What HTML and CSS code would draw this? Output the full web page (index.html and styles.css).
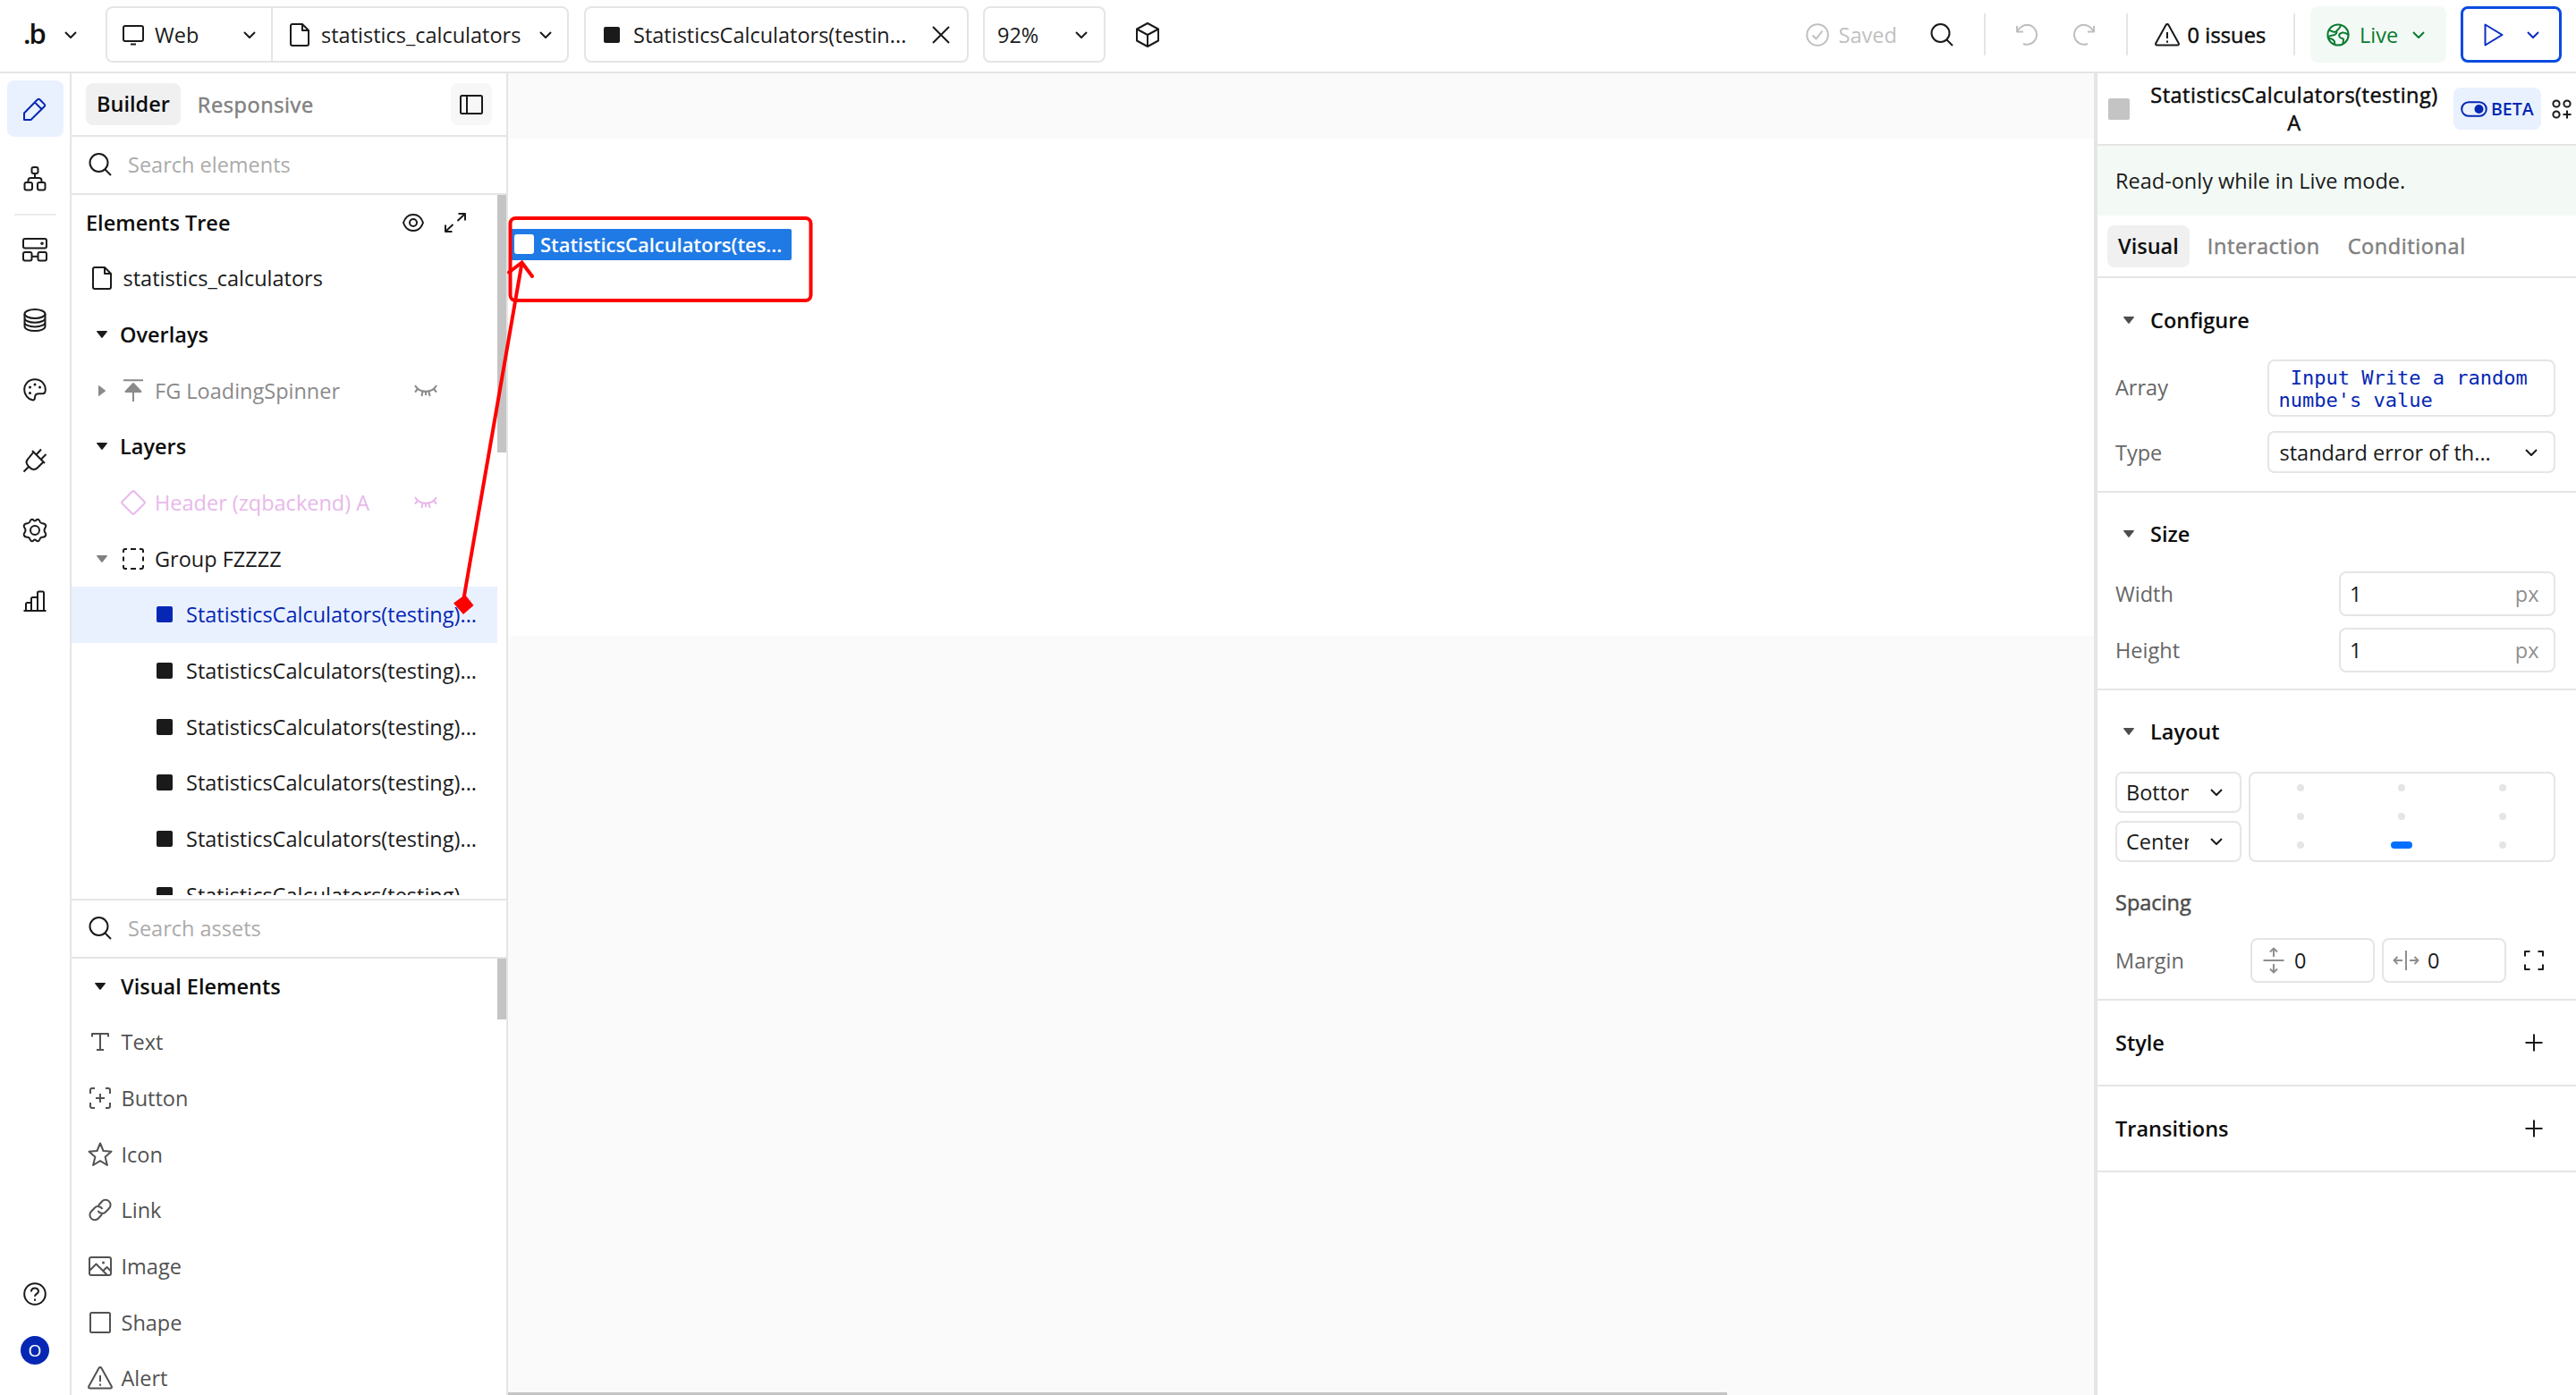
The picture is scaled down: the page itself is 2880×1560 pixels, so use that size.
FILE: index.html
```html
<!DOCTYPE html>
<html lang="en">
<head>
<meta charset="utf-8">
<title>statistics_calculators | Editor</title>
<link rel="stylesheet" href="styles.css">
</head>
<body>
<svg class="defs" aria-hidden="true">
  <symbol id="chevron" viewBox="0 0 14 8"><path d="M1 1l6 6 6-6"/></symbol>
  <symbol id="search" viewBox="0 0 26 26"><circle cx="11.5" cy="11" r="10"/><path d="M18.5 18.5l6.500 6.500"/></symbol>
  <symbol id="page" viewBox="0 0 22 26"><path d="M3 1h11l7 7v15a2 2 0 0 1-2 2H3a2 2 0 0 1-2-2V3a2 2 0 0 1 2-2zM14 1v7h7"/></symbol>
  <symbol id="down" viewBox="0 0 12 8"><path d="M.6 0h10.800c.5 0 .7.500.4.900L6.700 7.500c-.4.500-1 .5-1.400 0L.2.900C-.1.500.1 0 .6 0z"/></symbol>
  <symbol id="closed-eye" viewBox="0 0 26 16"><path d="M1 2c5 9 19 9 24 0M4 6L1 9.500M9.500 8.500L8.500 14M16.500 8.500l1 5.500M22 6l3 3.500M13 9v4"/></symbol>
  <symbol id="warn" viewBox="0 0 28 26"><path d="M12.500 2L1.300 22.300c-.6 1.200.1 2.200 1.300 2.200h22.800c1.200 0 1.900-1 1.300-2.200L15.500 2c-.7-1.200-2.300-1.200-3 0zM14 10v7M14 19.500v2.300"/></symbol>
  <symbol id="plus" viewBox="0 0 20 20"><path d="M10 .5v19M.5 10h19"/></symbol>
</svg>

<header class="topbar">
  <div class="logo"><span class="logo-text">.b</span><svg class="chev"><use href="#chevron"/></svg></div>
  <div class="box switcher">
    <div class="switch-web">
      <svg class="ic" width="24" height="24" viewBox="0 0 24 24"><rect x="1" y="2" width="22" height="17" rx="2"/><path d="M9 22.500h6"/></svg>
      <span class="web-name">Web</span><svg class="chev"><use href="#chevron"/></svg>
    </div>
    <div class="switch-page">
      <svg class="ic" width="22" height="26"><use href="#page"/></svg>
      <span class="page-name">statistics_calculators</span><svg class="chev"><use href="#chevron"/></svg>
    </div>
  </div>
  <div class="box element-tab"><i class="sq"></i><span>StatisticsCalculators(testin...</span><svg class="ic" width="18" height="18" viewBox="0 0 18 18"><path d="M0 0l18 18M18 0L0 18"/></svg></div>
  <div class="box zoom"><span>92%</span><svg class="chev"><use href="#chevron"/></svg></div>
  <svg class="ic cube" width="28" height="28" viewBox="0 0 28 28"><path d="M14 1l12 6.500v13L14 27 2 20.500v-13zM2 7.500L14 14l12-6.500M14 14v13"/></svg>
  <div class="topbar-right">
    <svg class="ic faint" width="26" height="26" viewBox="0 0 26 26"><circle cx="13" cy="13" r="11.800"/><path d="M7.500 13.500l4 4 7-9"/></svg>
    <span class="saved">Saved</span>
    <svg class="ic find" width="26" height="26"><use href="#search"/></svg>
    <i class="vline v1"></i>
    <svg class="ic faint undo" width="26" height="26" viewBox="0 0 26 26"><path d="M2 3v6.500h7M2.500 9C5 4.500 9.500 1.800 14 1.800A11 11 0 1 1 9 23"/></svg>
    <svg class="ic faint redo" width="26" height="26" viewBox="0 0 26 26"><path d="M24 3v6.500h-7M23.500 9C21 4.500 16.500 1.800 12 1.800A11 11 0 1 0 17 23"/></svg>
    <i class="vline v2"></i>
    <svg class="ic" width="28" height="26"><use href="#warn"/></svg>
    <span class="issues medium">0 issues</span>
    <i class="vline v3"></i>
    <div class="live">
      <svg class="ic" width="26" height="26" viewBox="0 0 26 26"><circle cx="13" cy="13" r="11.600"/><path d="M16 2c-.5 4-3 4-4.500 6.500S5 9 3 7.500M11.500 8.500c.5 3-2 5-4.500 5s-3 1.500-5 1M25 13c-3-1.500-4-3-7-2.500s-4.500 2-3.500 4.500 4 1 4.500 3-1 3-.5 4.500M9 24c0-3 1-3-1-5s-3-2.500-5.500-2"/></svg>
      <span>Live</span><svg class="chev"><use href="#chevron"/></svg>
    </div>
    <div class="play">
      <svg class="ic" width="22" height="26" viewBox="0 0 22 26"><path d="M1.500 1.500v23L20.500 13z"/></svg>
      <svg class="chev"><use href="#chevron"/></svg>
    </div>
  </div>
</header>

<div class="workspace">
  <nav class="rail">
    <div class="rail-item active"><svg class="ic" width="26" height="26" viewBox="0 0 26 26"><path d="M1 25v-7.500L16 2.300c.7-.8 1.700-.8 2.400 0l5.300 5.300c.7.700.7 1.700 0 2.400L8.500 25zM13 5.500l7.500 7.500"/></svg></div>
    <div class="rail-item"><svg class="ic" width="26" height="28" viewBox="0 0 26 28"><rect x="9.500" y="1" width="7" height="7" rx="2"/><rect x="1.500" y="18" width="8.500" height="8.500" rx="2"/><rect x="16" y="18" width="8.500" height="8.500" rx="2"/><path d="M13 8v5M5.500 18v-2a3 3 0 0 1 3-3h9a3 3 0 0 1 3 3v2"/></svg></div>
    <i class="rail-line"></i>
    <div class="rail-item"><svg class="ic" width="28" height="28" viewBox="0 0 28 28"><rect x="1" y="2" width="26" height="10.500" rx="2"/><circle cx="22" cy="7.200" r=".8"/><rect x="1" y="17" width="9.500" height="9.500" rx="2"/><rect x="17.500" y="17" width="9.500" height="9.500" rx="2"/><path d="M10.500 21.800h7"/></svg></div>
    <div class="rail-item"><svg class="ic" width="26" height="26" viewBox="0 0 26 26"><ellipse cx="13" cy="6" rx="11.500" ry="5"/><path d="M1.500 6v14c0 2.800 5 5 11.500 5s11.500-2.200 11.500-5V6M1.500 10.700c0 2.800 5 5 11.500 5s11.500-2.200 11.500-5M1.500 15.400c0 2.800 5 5 11.500 5s11.500-2.200 11.500-5"/></svg></div>
    <div class="rail-item"><svg class="ic" width="26" height="26" viewBox="0 0 26 26"><path d="M13 1.200C6 1.200 1.200 6.500 1.200 12.700c0 6 4.300 10.600 8.800 11.600 2 .5 3-1 3-2.800 0-3 2-4.300 4.500-4.300h4c2 0 3.300-2 3.300-4.500C24.800 6.500 20 1.200 13 1.200z"/><path class="dots" d="M13 7h.01M7.500 10h.01M18.500 10h.01M7.500 16.500h.01"/></svg></div>
    <div class="rail-item"><svg class="ic" width="28" height="28" viewBox="0 0 28 28"><path d="M1.500 26.500l6-6M12.500 4.500l11 11-6.500 6.500c-2.500 2.500-6 2.500-8.500 0l-2-2c-2.300-2.300-2.300-5.500 0-8zM11 3l14 14M16 7l5-5.500M21.500 12l5-5"/></svg></div>
    <div class="rail-item"><svg class="ic" width="28" height="28" viewBox="0 0 28 28"><circle cx="14" cy="14" r="5"/><path d="M9 3c1-1.500 2.500-1.500 3.500-.3 1 1 2 1 3 0 1-1.200 2.500-1.200 3.500.3.700 1.200.5 3.200 3 3.300 2.800-.1 4 1.200 4.300 2.700.3 1.700-1.800 2.500-1.800 5s2.100 3.300 1.800 5c-.3 1.500-1.500 2.800-4.300 2.700-2.500.1-2.300 2.100-3 3.300-1 1.500-2.500 1.500-3.500.3-1-1-2-1-3 0-1 1.200-2.500 1.200-3.500-.3-.7-1.200-.5-3.200-3-3.300-2.800.1-4-1.200-4.300-2.700-.3-1.700 1.800-2.500 1.800-5s-2.100-3.300-1.800-5C2 7.500 3.200 6.200 6 6.300 8.500 6.200 8.300 4.200 9 3z"/></svg></div>
    <div class="rail-item"><svg class="ic" width="26" height="26" viewBox="0 0 26 26"><path d="M.5 24h25M3 24v-7.500a1.500 1.500 0 0 1 1.500-1.500H9M9 24V10.500A1.500 1.500 0 0 1 10.500 9H16M16 24V4a1.500 1.500 0 0 1 1.500-1.500h4A1.500 1.500 0 0 1 23 4v20"/></svg></div>
    <div class="rail-foot">
      <svg class="ic" width="26" height="26" viewBox="0 0 26 26"><circle cx="13" cy="13" r="11.800"/><path d="M9 10.500c0-5.200 8-5 8-.6 0 3-4 3-4 5.800M13 18.500V20.800"/></svg>
      <div class="avatar">O</div>
    </div>
  </nav>

  <aside class="left">
    <div class="modes"><b class="pill">Builder</b><span class="mode-off medium wide">Responsive</span>
      <div class="panel-toggle"><svg class="ic" width="26" height="22" viewBox="0 0 26 22"><rect x="1" y="1" width="24" height="20" rx="1.500"/><path d="M8 1v20"/></svg></div></div>
    <div class="search"><svg class="ic" width="26" height="26"><use href="#search"/></svg><span>Search elements</span></div>
    <div class="tree">
      <div class="row title"><b>Elements Tree</b>
        <svg class="ic eye" width="24" height="20" viewBox="0 0 24 20"><path d="M1 10c2-6 6-9 11-9s9 3 11 9c-2 6-6 9-11 9S3 16 1 10z"/><circle cx="12" cy="10" r="4"/></svg>
        <svg class="ic expand" width="24" height="22" viewBox="0 0 24 22"><path d="M15.500 1H23v7.500M22.500 1.500l-8 7.500M1 13.500V21h7.500M1.500 20.500l8-7.500"/></svg></div>
      <div class="row root"><svg class="ic" width="22" height="26"><use href="#page"/></svg><span>statistics_calculators</span></div>
      <div class="row group"><svg class="tri"><use href="#down"/></svg><b>Overlays</b></div>
      <div class="row item gray"><svg class="tri-r" viewBox="0 0 8 12"><path d="M0 .6v10.800c0 .5.500.7.900.4l6.600-5.100c.5-.4.500-1 0-1.400L.9.200C.5-.1 0 .1 0 .6z"/></svg><svg class="ic it" width="24" height="26" viewBox="0 0 24 26"><path d="M1 1.200h22M12 12v13"/><path class="solid" d="M12 5l8.500 9h-17z"/></svg><span>FG LoadingSpinner</span><svg class="ic hid" width="26" height="16"><use href="#closed-eye"/></svg></div>
      <div class="row group"><svg class="tri"><use href="#down"/></svg><b>Layers</b></div>
      <div class="row item pink"><i class="tri-gap"></i><svg class="ic it" width="28" height="28" viewBox="0 0 28 28"><path d="M12.800 1.700L1.700 12.800a1.700 1.700 0 0 0 0 2.400l11.100 11.100a1.700 1.700 0 0 0 2.400 0l11.100-11.100a1.700 1.700 0 0 0 0-2.400L15.200 1.700a1.700 1.700 0 0 0-2.400 0z"/></svg><span>Header (zqbackend) A</span><svg class="ic hid" width="26" height="16"><use href="#closed-eye"/></svg></div>
      <div class="row item"><svg class="tri mid"><use href="#down"/></svg><svg class="ic it dash" width="24" height="24" viewBox="0 0 24 24"><path d="M1 5V3a2 2 0 0 1 2-2h2M19 1h2a2 2 0 0 1 2 2v2M23 19v2a2 2 0 0 1-2 2h-2M5 23H3a2 2 0 0 1-2-2v-2M9 1h6M9 23h6M1 9.500v5M23 9.500v5"/></svg><span>Group FZZZZ</span></div>
      <div class="row leaf selected"><i class="sq"></i><span>StatisticsCalculators(testing)...</span></div>
      <div class="row leaf"><i class="sq"></i><span>StatisticsCalculators(testing)...</span></div>
      <div class="row leaf"><i class="sq"></i><span>StatisticsCalculators(testing)...</span></div>
      <div class="row leaf"><i class="sq"></i><span>StatisticsCalculators(testing)...</span></div>
      <div class="row leaf"><i class="sq"></i><span>StatisticsCalculators(testing)...</span></div>
      <div class="row leaf"><i class="sq"></i><span>StatisticsCalculators(testing)...</span></div>
      <i class="thumb tree-thumb"></i>
    </div>
    <div class="search assets-search"><svg class="ic" width="26" height="26"><use href="#search"/></svg><span>Search assets</span></div>
    <div class="assets">
      <div class="row asset-title"><svg class="tri"><use href="#down"/></svg><b>Visual Elements</b></div>
      <div class="row asset"><svg class="ic" width="28" height="28" viewBox="0 0 28 28"><path d="M5 8.500V5h18v3.500M14 5v18M10 23h8"/></svg><span>Text</span></div>
      <div class="row asset"><svg class="ic" width="28" height="28" viewBox="0 0 28 28"><path d="M3 9V5a2 2 0 0 1 2-2h3M20 3h3a2 2 0 0 1 2 2v4M25 19v4a2 2 0 0 1-2 2h-3M8 25H5a2 2 0 0 1-2-2v-4M14 9v10M9 14h10"/></svg><span>Button</span></div>
      <div class="row asset"><svg class="ic" width="28" height="28" viewBox="0 0 28 28"><path d="M14 1.500l3.500 8.500 9 .8-6.900 6 2.300 9.200L14 21.200 6.100 26l2.300-9.200-6.900-6 9-.8z"/></svg><span>Icon</span></div>
      <div class="row asset"><svg class="ic" width="28" height="28" viewBox="0 0 28 28"><path d="M12 9l4-4.500a5.500 5.500 0 0 1 8 7.800l-3.800 4a5.500 5.500 0 0 1-8.700-1.300M16 19l-4 4.500a5.500 5.500 0 0 1-8-7.800l3.800-4a5.500 5.500 0 0 1 8.700 1.300"/></svg><span>Link</span></div>
      <div class="row asset"><svg class="ic" width="28" height="28" viewBox="0 0 28 28"><rect x="2" y="4" width="24" height="20" rx="2"/><path d="M2 19l7.500-7.500L22 24M17.500 19l4-4 4.500 4.500"/><path class="dots" d="M17.500 10h.01"/></svg><span>Image</span></div>
      <div class="row asset"><svg class="ic" width="28" height="28" viewBox="0 0 28 28"><rect x="3" y="3" width="22" height="22" rx="1.500"/></svg><span>Shape</span></div>
      <div class="row asset"><svg class="ic" width="28" height="26"><use href="#warn"/></svg><span>Alert</span></div>
      <i class="thumb assets-thumb"></i>
    </div>
  </aside>

  <main class="canvas">
    <div class="artboard"></div>
    <div class="element-label"><i></i><span>StatisticsCalculators(tes...</span></div>
    <i class="canvas-scroll"></i>
  </main>

  <aside class="right">
    <div class="prop-head"><i class="type-sq"></i><div class="prop-title medium">StatisticsCalculators(testing) A</div>
      <div class="beta"><svg class="ic" width="30" height="18" viewBox="0 0 30 18"><rect x="1.200" y="1.200" width="27.600" height="15.600" rx="7.800"/><circle class="solid" cx="20.500" cy="9" r="4"/></svg><b>BETA</b></div>
      <svg class="ic apps" width="22" height="22" viewBox="0 0 22 22"><circle cx="5" cy="5" r="3.600"/><circle cx="17" cy="5" r="3.600"/><circle cx="5" cy="17" r="3.600"/><path d="M17 12.500v9M12.500 17h9"/></svg></div>
    <div class="notice">Read-only while in Live mode.</div>
    <div class="tabs"><b class="pill">Visual</b><span class="medium wide">Interaction</span><span class="medium wide">Conditional</span></div>

    <section class="configure">
      <h3><svg class="tri"><use href="#down"/></svg>Configure</h3>
      <div class="field array"><label>Array</label><div class="box code"> Input Write a random
numbe's value</div></div>
      <div class="field type"><label>Type</label><div class="box select"><span>standard error of th...</span><svg class="chev"><use href="#chevron"/></svg></div></div>
    </section>
    <section class="size">
      <h3><svg class="tri"><use href="#down"/></svg>Size</h3>
      <div class="field dim"><label>Width</label><div class="box"><span>1</span><em>px</em></div></div>
      <div class="field dim"><label>Height</label><div class="box"><span>1</span><em>px</em></div></div>
    </section>
    <section class="layout">
      <h3><svg class="tri"><use href="#down"/></svg>Layout</h3>
      <div class="align">
        <div class="align-selects">
          <div class="box"><span>Bottom</span><svg class="chev"><use href="#chevron"/></svg></div>
          <div class="box"><span>Center</span><svg class="chev"><use href="#chevron"/></svg></div>
        </div>
        <div class="box dots-grid"><i></i><i></i><i></i><i></i><i></i><i></i><i></i><i class="on"></i><i></i></div>
      </div>
      <div class="spacing medium">Spacing</div>
      <div class="field margin"><label>Margin</label>
        <div class="box"><svg class="ic" width="28" height="30" viewBox="0 0 28 30"><path d="M2.500 15h23M14 11V2M10 5.500L14 1.500l4 4M14 19v9M10 24.500l4 4 4-4"/></svg><span>0</span></div>
        <div class="box"><svg class="ic" width="30" height="28" viewBox="0 0 30 28"><path d="M15 3v22M11 14H2M5.500 10L1.500 14l4 4M19 14h9M24.500 10l4 4-4 4"/></svg><span>0</span></div>
        <svg class="ic corners" width="22" height="22" viewBox="0 0 22 22"><path d="M1 6.500V1h5.500M15.500 1H21v5.500M21 15.500V21h-5.500M6.500 21H1v-5.500"/></svg></div>
    </section>
    <section class="closed"><b>Style</b><svg class="ic" width="20" height="20"><use href="#plus"/></svg></section>
    <section class="closed"><b>Transitions</b><svg class="ic" width="20" height="20"><use href="#plus"/></svg></section>
  </aside>
</div>

<svg class="annotation" viewBox="500 230 420 470">
  <rect x="570.500" y="244" width="336" height="92" rx="6"/>
  <path d="M518 672L583.500 294M569 304.500l14.500-11 11.500 15.500"/>
  <path class="marker" d="M520 665l9.500 12-11.500 10-11-12.500z"/>
</svg>
</body>
</html>
```
FILE: styles.css
```css
* { box-sizing: border-box; }
body {
  margin: 0; width: 2880px; height: 1560px; overflow: hidden; position: relative;
  display: flex; flex-direction: column; background: #fff; color: #1a1a1a;
  font: 23.5px/32px "Open Sans", "Noto Sans", sans-serif;
}
b, h3 { font-weight: 600; color: #0d0d0d; }
svg { flex: none; display: block; overflow: visible; }
svg.defs { position: absolute; width: 0; height: 0; }
.ic, .chev { fill: none; stroke: currentColor; stroke-width: 2; stroke-linejoin: round; }
.ic .solid { fill: currentColor; }
.ic .dots { stroke-width: 3; stroke-linecap: round; }
.chev { width: 14px; height: 8px; }
.tri, .tri-r { fill: currentColor; width: 12px; height: 8px; }
.tri-r { width: 8px; height: 12px; }
.box { border: 2px solid #e5e5e5; border-radius: 8px; background: #fff; display: flex; align-items: center; }
.sq { width: 18px; height: 18px; background: currentColor; border-radius: 2px; flex: none; }
span, b { white-space: nowrap; }
/* Open Sans ships no 500 cut here, so a thin stroke stands in for it */
.medium { -webkit-text-stroke: .5px currentColor; }
.wide { letter-spacing: .6px; }

.topbar { height: 82px; flex: none; border-bottom: 2px solid #e5e5e5; padding: 7px 16px 0 26px; display: flex; align-items: flex-start; }
.topbar > *, .topbar-right { height: 63px; }
.logo { display: flex; align-items: center; width: 92px; }
.logo-text { width: 46px; font: 600 31px/32px "Open Sans", sans-serif; letter-spacing: -2px; padding-bottom: 4px; color: #111; }
.switcher { width: 518px; }
.switch-web { width: 185px; height: 59px; border-right: 2px solid #e5e5e5; display: flex; align-items: center; padding-left: 17px; }
.web-name { width: 99px; margin-left: 12px; }
.switch-page { display: flex; align-items: center; padding-left: 19px; }
.page-name { width: 244px; margin-left: 13px; }
.element-tab { margin-left: 17px; width: 430px; padding-left: 20px; }
.element-tab span { width: 335px; margin-left: 15px; }
.zoom { margin-left: 16px; width: 137px; padding-left: 14px; }
.zoom span { width: 87px; }
.topbar > .cube { height: 28px; margin: 18px 0 0 33px; }
.topbar-right { margin-left: auto; display: flex; align-items: center; }
.faint, .saved { color: #bfbfbf; }
.saved { margin-left: 11px; width: 68px; }
.find { margin-left: 34px; }
.vline { width: 2px; height: 47px; background: #e5e5e5; }
.v1 { margin-left: 34px; }
.undo { margin-left: 33px; }
.redo { margin-left: 38px; }
.v2 { margin-left: 34px; }
.v2 + .ic { margin-left: 30px; }
.issues { margin-left: 9px; width: 92px; color: #0d0d0d; letter-spacing: .15px; }
.v3 { margin-left: 26.500px; }
.live { margin-left: 17px; width: 152px; height: 63px; border-radius: 8px; background: #f3faf6; color: #0a7a2f; display: flex; align-items: center; padding-left: 18px; }
.live span { width: 59px; margin-left: 11px; }
.play { margin-left: 16px; width: 113px; height: 63px; border: 3px solid #0a4be0; border-radius: 8px; color: #0a2fc0; display: flex; align-items: center; padding-left: 23px; gap: 26px; }

.workspace { flex: 1; min-height: 0; display: flex; }
.rail { width: 80px; flex: none; border-right: 2px solid #e5e5e5; padding-top: 8px; display: flex; flex-direction: column; align-items: center; gap: 15.500px; }
.rail-item { width: 63px; height: 63px; border-radius: 8px; display: flex; align-items: center; justify-content: center; }
.rail-item.active { background: #e9f1ff; color: #0527b3; }
.rail-line { width: 47px; height: 2px; background: #ebebeb; margin: -8px 0 -9px; }
.rail-foot { margin-top: auto; padding-bottom: 34px; display: flex; flex-direction: column; align-items: center; gap: 34px; }
.avatar { width: 32px; height: 32px; border-radius: 50%; background: #0527b3; color: #fff; font-size: 19px; text-align: center; }

.left { width: 488px; flex: none; border-right: 2px solid #e5e5e5; display: flex; flex-direction: column; }
.modes { height: 71px; border-bottom: 2px solid #e5e5e5; display: flex; align-items: center; padding: 0 16px; }
.pill { background: #f0f0f0; border-radius: 8px; height: 47px; line-height: 47px; padding: 0 12px; }
.mode-off { color: #808080; margin-left: 19px; }
.panel-toggle { margin-left: auto; width: 46px; height: 47px; background: #f7f7f7; border-radius: 8px; display: flex; align-items: center; justify-content: center; }
.search { height: 64.500px; flex: none; border-bottom: 2px solid #e5e5e5; display: flex; align-items: center; padding-left: 19px; gap: 18px; }
.search span { color: #ababab; }
.tree { height: 783.500px; overflow: hidden; position: relative; }
.row { height: 62.670px; display: flex; align-items: center; }
.title { padding-left: 16px; }
.title .eye { margin-left: auto; }
.title .expand { margin: 0 45px 0 23px; }
.root { padding-left: 22.500px; gap: 13px; }
.group { padding-left: 28px; gap: 14px; }
.item { padding-left: 28px; }
.item .tri-r { margin: 0 2px; }
.tri-gap { width: 12px; }
.item .it { margin: 0 12px 0 17px; }
.item .it[width="28"] { margin: 0 10px 0 15px; }
.hid { margin-left: auto; margin-right: 77px; }
.gray { color: #8a8a8a; }
.pink { color: #e8b8ea; }
.mid { color: #808080; }
.leaf { padding-left: 95px; gap: 15px; width: 476px; }
.selected { background: #e9f1ff; color: #0527b3; }
.thumb { position: absolute; right: 0; top: 0; width: 10px; background: #c4c4c4; }
.tree-thumb { height: 288px; }
.assets-search { height: 66.500px; margin-top: 4px; border-top: 2px solid #e5e5e5; }
.assets { flex: 1; min-height: 0; overflow: hidden; position: relative; }
.asset-title { padding-left: 26px; gap: 17px; }
.asset { color: #525252; padding-left: 17.500px; gap: 10px; }
.assets-thumb { height: 68px; }

.canvas { flex: 1; background: #fafafa; position: relative; padding-top: 73px; }
.artboard { height: 556px; background: #fff; }
.element-label { position: absolute; left: 2px; top: 174px; width: 315px; height: 35px; background: #1f7ae5; border-radius: 2px; display: flex; align-items: center; padding: 0 0 1px 5px; gap: 7px; color: #fff; font-size: 22px; font-weight: 600; letter-spacing: -.05px; }
.element-label i { width: 22px; height: 22px; border-radius: 3px; background: #fff; }
.canvas-scroll { position: absolute; left: 0; bottom: 0; width: 1363px; height: 3px; background: #c4c4c4; }

.right { width: 539px; flex: none; border-left: 4px solid #e5e5e5; display: flex; flex-direction: column; overflow: hidden; }
.prop-head { height: 81px; flex: none; border-bottom: 2px solid #e5e5e5; display: flex; align-items: center; padding-left: 12px; }
.type-sq { width: 24px; height: 24px; border-radius: 2px; background: #c4c4c4; flex: none; }
.prop-title { width: 330px; flex: none; margin: 0 13px 0 19px; text-align: center; line-height: 31px; letter-spacing: .5px; color: #0d0d0d; }
.beta { width: 98px; height: 47px; flex: none; background: #e9f1ff; border-radius: 8px; color: #0527b3; display: flex; align-items: center; padding-left: 8px; gap: 4px; font-size: 19.500px; }
.beta b { color: inherit; }
.apps { margin-left: 12px; }
.notice { height: 78px; flex: none; background: #f3faf6; padding-left: 20px; line-height: 78px; }
.tabs { height: 70px; flex: none; border-bottom: 2px solid #e5e5e5; display: flex; align-items: center; padding-left: 11px; }
.tabs .pill { padding: 0 12px; }
.tabs span { color: #808080; margin-left: 20px; }
.tabs span + span { margin-left: 31px; }
.right section { border-bottom: 2px solid #e5e5e5; flex: none; padding: 0 23.500px 0 20px; }
h3 { margin: 0; font-size: 23.500px; line-height: 32px; display: flex; align-items: center; gap: 18px; padding-left: 9px; }
h3 .tri { color: #4d4d4d; }
.field { display: flex; align-items: center; justify-content: space-between; }
label { color: #666; }
.right .configure { height: 240px; padding-top: 31px; }
.configure .box { width: 322px; }
.code { height: 64px; margin-top: 28px; padding: 1px 11px 0; font: 22px/25px "DejaVu Sans Mono", "Liberation Mono", monospace; color: #0527b3; white-space: pre; }
.array label { padding-top: 26px; }
.type { margin-top: 16px; }
.select { height: 47px; padding: 0 18px 0 12px; justify-content: space-between; }
.right .size { height: 221px; padding-top: 30px; }
.dim .box { width: 241.500px; height: 50px; padding: 0 16px 0 10px; justify-content: space-between; }
.dim { margin-top: 12.500px; }
h3 + .dim { margin-top: 26px; }
em { font-style: normal; color: #8f8f8f; }
.right .layout { height: 347px; padding-top: 30px; }
.align { margin-top: 29px; display: flex; gap: 8.500px; }
.align-selects { display: flex; flex-direction: column; gap: 8.600px; }
.align-selects .box { width: 140.500px; height: 46px; padding-left: 10px; gap: 24px; }
.align-selects span { width: 70px; overflow: hidden; }
.dots-grid { flex: 1; height: 100.600px; display: grid; grid-template-columns: repeat(3, 1fr); place-items: center; }
.dots-grid i { width: 8px; height: 8px; border-radius: 50%; background: #e5e5e5; }
.dots-grid .on { width: 24px; border-radius: 4px; background: #0070ff; }
.spacing { margin-top: 29px; color: #4d4d4d; }
.margin { margin-top: 24px; justify-content: flex-start; }
.margin label { width: 151px; }
.margin .box { width: 139px; height: 50px; padding-left: 10px; margin-right: 8px; gap: 9px; }
.margin .box .ic { color: #8f8f8f; }
.margin .corners { margin-left: 12px; }
.right .closed { height: 96px; display: flex; align-items: center; justify-content: space-between; padding-right: 37.500px; }

.annotation { position: absolute; left: 500px; top: 230px; width: 420px; height: 470px; fill: none; stroke: #f00; stroke-width: 4; stroke-linecap: round; }
.annotation .marker { fill: #f00; stroke: none; }
```
